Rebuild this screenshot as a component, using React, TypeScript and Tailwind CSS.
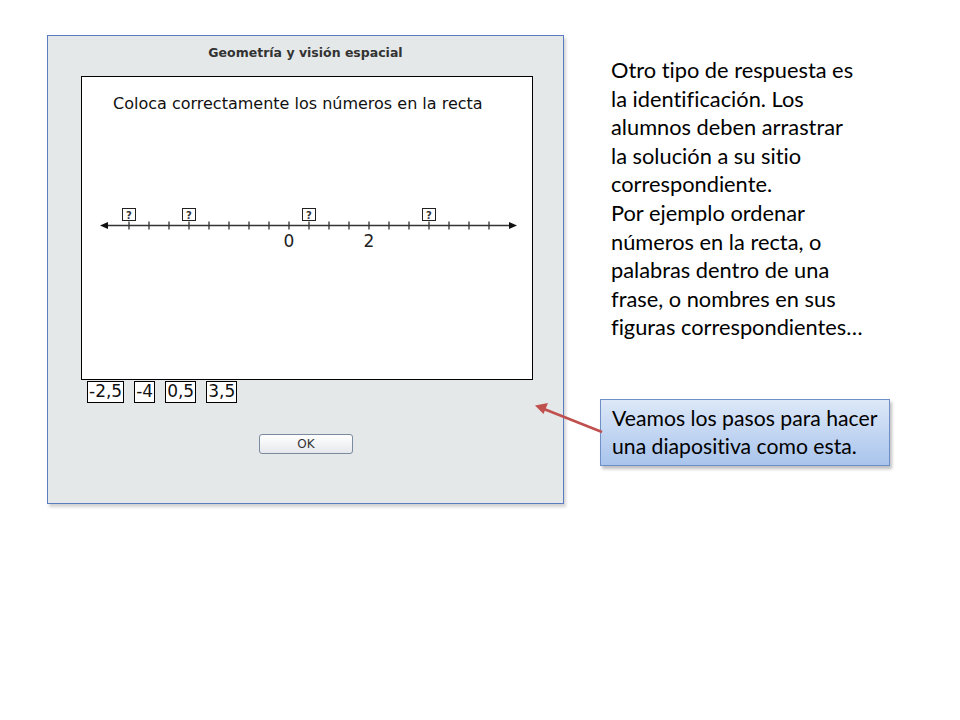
import React from "react";

const ticks = Array.from({ length: 19 }, (_, i) => 128 + i * 20);
const marks = [0, 3, 9, 15];

function NumberLine() {
    return (
        <svg width="449" height="60" viewBox="81 200 449 60" className="block">
            <line x1="104" y1="225.5" x2="511" y2="225.5" stroke="#333" strokeWidth="1.5" />
            <polygon points="99,225.5 107,222 107,229" fill="#111" />
            <polygon points="516,225.5 508,222 508,229" fill="#111" />
            {ticks.map((x) => (
                <line key={x} x1={x} y1="221.5" x2={x} y2="229.5" stroke="#333" strokeWidth="1.3" />
            ))}
            {marks.map((i) => (
                <g key={i}>
                    <rect x={ticks[i] - 6.5} y="208.5" width="13" height="12" fill="white" stroke="#222" strokeWidth="1" />
                    <text x={ticks[i]} y="218.5" fontSize="10" fontWeight="bold" textAnchor="middle" fill="#333"
                          fontFamily="DejaVu Sans, sans-serif">?</text>
                </g>
            ))}
            <text x="288" y="247" fontSize="17" textAnchor="middle" fill="#222" fontFamily="DejaVu Sans, sans-serif">0</text>
            <text x="368" y="247" fontSize="17" textAnchor="middle" fill="#222" fontFamily="DejaVu Sans, sans-serif">2</text>
        </svg>
    );
}

function Tile({ label }: { label: string }) {
    return (
        <div className="border border-black bg-white h-[22px] px-[1px] flex items-center text-[17px] leading-none text-[#111]">
            {label}
        </div>
    );
}

export default function App() {
    return (
        <div className="relative w-[960px] h-[720px] bg-white overflow-hidden">
            <div className="flex pt-[35px] pl-[47px]">
                {/* actividad */}
                <div className="w-[517px] h-[469px] bg-[#e4e8e8] border border-[#5b7cc0] shadow-[2px_3px_3px_rgba(0,0,0,0.18)] flex flex-col">
                    <div className="pt-[8px] text-center font-bold text-[12.5px] text-[#333]" style={{ fontFamily: "DejaVu Sans, sans-serif" }}>
                        Geometría y visión espacial
                    </div>
                    <div className="ml-[33px] mt-[13px] w-[452px] h-[304px] bg-white border border-black flex flex-col"
                         style={{ fontFamily: "DejaVu Sans, sans-serif" }}>
                        <div className="pl-[31px] pt-[15px] text-[16px] text-[#111]">
                            Coloca correctamente los números en la recta
                        </div>
                        <div className="mt-[84px]">
                            <NumberLine />
                        </div>
                    </div>
                    <div className="flex ml-[39px] mt-[1px] gap-[10px]" style={{ fontFamily: "DejaVu Sans, sans-serif" }}>
                        <Tile label="-2,5" />
                        <Tile label="-4" />
                        <Tile label="0,5" />
                        <Tile label="3,5" />
                    </div>
                    <div className="flex mt-[31px] ml-[211px]">
                        <div className="w-[94px] h-[20px] rounded-[3px] border border-[#7a8aa0] bg-gradient-to-b from-white to-[#e6e8ec] flex items-center justify-center text-[12px] text-[#333]"
                             style={{ fontFamily: "DejaVu Sans, sans-serif" }}>
                            OK
                        </div>
                    </div>
                </div>

                {/* texto */}
                <div className="flex flex-col ml-[31px] [font-variant-ligatures:none]" style={{ fontFamily: "Lato, sans-serif" }}>
                    <div className="mt-[21px] ml-[16px] text-[21.8px] leading-[28.6px] text-black">
                        Otro tipo de respuesta es<br />
                        la identificación. Los<br />
                        alumnos deben arrastrar<br />
                        la solución a su sitio<br />
                        correspondiente.<br />
                        Por ejemplo ordenar<br />
                        números en la recta, o<br />
                        palabras dentro de una<br />
                        frase, o nombres en sus<br />
                        figuras correspondientes…
                    </div>
                    <div className="mt-[57px] ml-[5px] w-[290px] h-[67px] border border-[#6f8fc9] bg-gradient-to-b from-[#dde8f8] to-[#a9c4ec] shadow-[2px_3px_3px_rgba(0,0,0,0.25)] pl-[11px] pt-[4px] text-[21.2px] leading-[28px] text-black">
                        Veamos los pasos para hacer<br />
                        una diapositiva como esta.
                    </div>
                </div>
            </div>

            {/* flecha */}
            <svg className="absolute left-0 top-0 pointer-events-none" width="960" height="720">
                <line x1="602" y1="432" x2="544" y2="409" stroke="#c0504d" strokeWidth="2.5" />
                <polygon points="535,405.5 548,403 543.5,414" fill="#c0504d" />
            </svg>
        </div>
    );
}
